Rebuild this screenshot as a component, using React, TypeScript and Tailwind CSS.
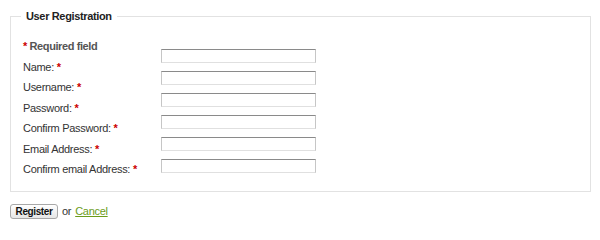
import React from "react";

const labels = [
  "Name:",
  "Username:",
  "Password:",
  "Confirm Password:",
  "Email Address:",
  "Confirm email Address:",
];

export default function App() {
  return (
    <div
      className="w-[600px] h-[234px] bg-white pt-[9px] pl-[10px] text-[#333]"
      style={{ fontFamily: '"Liberation Sans", Arial, sans-serif' }}
    >
      <fieldset className="w-[581px] h-[183px] border border-[#e2e2e2] pl-[12px] pr-0 pt-0 pb-0 m-0">
        <legend className="ml-[-2px] px-[5px] text-[11px] leading-[14px] font-bold tracking-[-0.35px] text-[#222]">
          User Registration
        </legend>
        <div className="flex mt-[13px]">
          <div className="w-[138px] flex flex-col text-[11px] leading-[20.5px] tracking-[-0.3px]">
            <div className="font-bold text-[#555] tracking-[-0.4px]">
              <span className="text-[#cc0000]">*</span> Required field
            </div>
            {labels.map((l) => (
              <div key={l}>
                {l} <span className="text-[#cc0000] font-bold">*</span>
              </div>
            ))}
          </div>
          <div className="flex flex-col gap-[8px] pt-[13px]">
            {labels.map((l) => (
              <input
                key={l}
                type="text"
                className="block w-[155px] h-[14px] bg-white border border-t-[#8a8a8a] border-x-[#c6c6c6] border-b-[#e0e0e0] outline-none"
              />
            ))}
          </div>
        </div>
      </fieldset>
      <div className="flex items-center mt-[11px] text-[11px] tracking-[-0.3px]">
        <button className="w-[48px] h-[15px] rounded-[3px] border border-[#a8a8a8] bg-gradient-to-b from-white to-[#e6e6e6] text-[10px] leading-[13px] font-bold tracking-[-0.4px] text-[#111]">
          Register
        </button>
        <span className="ml-[4px] text-[#333]">or</span>
        <a href="#" className="ml-[4px] text-[#6b9c1a] underline">
          Cancel
        </a>
      </div>
    </div>
  );
}
